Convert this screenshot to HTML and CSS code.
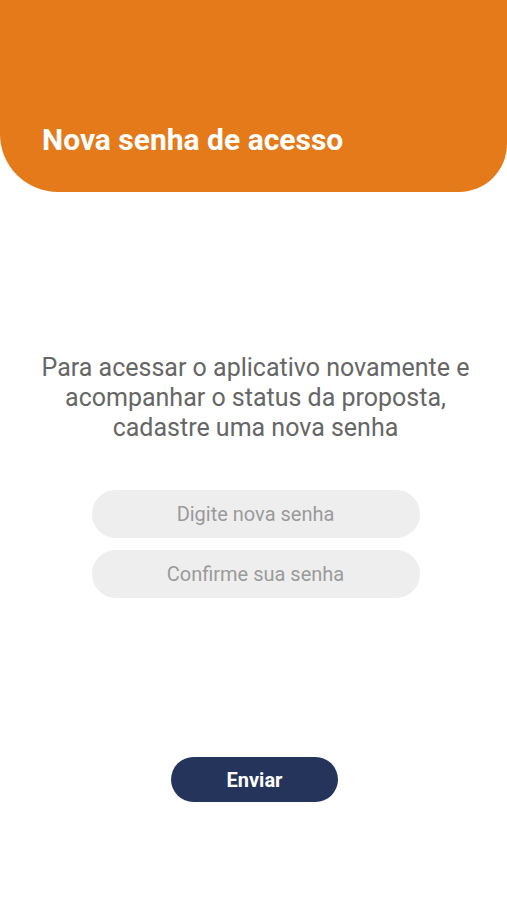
FILE: index.html
```html
<!DOCTYPE html>
<html lang="pt-BR">
<head>
    <meta charset="UTF-8">
    <meta name="viewport" content="width=device-width, initial-scale=1.0">
    <title>Nova senha de acesso</title>
    <link rel="stylesheet" href="styles.css">
</head>
<body>
    <div class="header">
        <h1>Nova senha de acesso</h1>
    </div>

    <div class="content">
        <p class="intro">Para acessar o aplicativo novamente e acompanhar o status da proposta, cadastre uma nova senha</p>

        <form class="password-form">
            <input type="password" class="field" placeholder="Digite nova senha">
            <input type="password" class="field" placeholder="Confirme sua senha">
        </form>
    </div>

    <div class="actions">
        <button type="button" class="send-button">Enviar</button>
    </div>
</body>
</html>
```

FILE: styles.css
```css
body {
    margin: 0;
    height: 100vh;
    background-color: #ffffff;
    font-family: Roboto, 'Noto Sans', sans-serif;
    display: flex;
    flex-direction: column;
}
.header {
    background-color: #e57a1a;
    height: 192px;
    border-radius: 0 0 48px 58px;
    display: flex;
    align-items: flex-end;
    box-sizing: border-box;
    padding: 0 0 36px 42px;
}
.header h1 {
    margin: 0;
    color: #ffffff;
    font-size: 30px;
    font-weight: 700;
    line-height: 32px;
}
.content {
    margin-top: 161px;
    padding-left: 4px;
    display: flex;
    flex-direction: column;
    align-items: center;
}
.intro {
    margin: 0;
    width: 440px;
    text-align: center;
    color: #666666;
    font-size: 25px;
    line-height: 30px;
}
.password-form {
    margin-top: 47px;
    display: flex;
    flex-direction: column;
    gap: 12px;
}
.field {
    width: 328px;
    height: 48px;
    box-sizing: border-box;
    border: none;
    border-radius: 24px;
    background-color: #eeeeee;
    text-align: center;
    font-family: inherit;
    font-size: 20px;
    color: #555555;
    outline: none;
}
.field::placeholder {
    color: #9a9a9a;
}
.actions {
    margin-top: 159px;
    padding-left: 2px;
    display: flex;
    justify-content: center;
}
.send-button {
    width: 167px;
    height: 45px;
    border: none;
    border-radius: 23px;
    background-color: #24345a;
    color: #ffffff;
    font-family: inherit;
    font-size: 20px;
    font-weight: 700;
    cursor: pointer;
}
```
